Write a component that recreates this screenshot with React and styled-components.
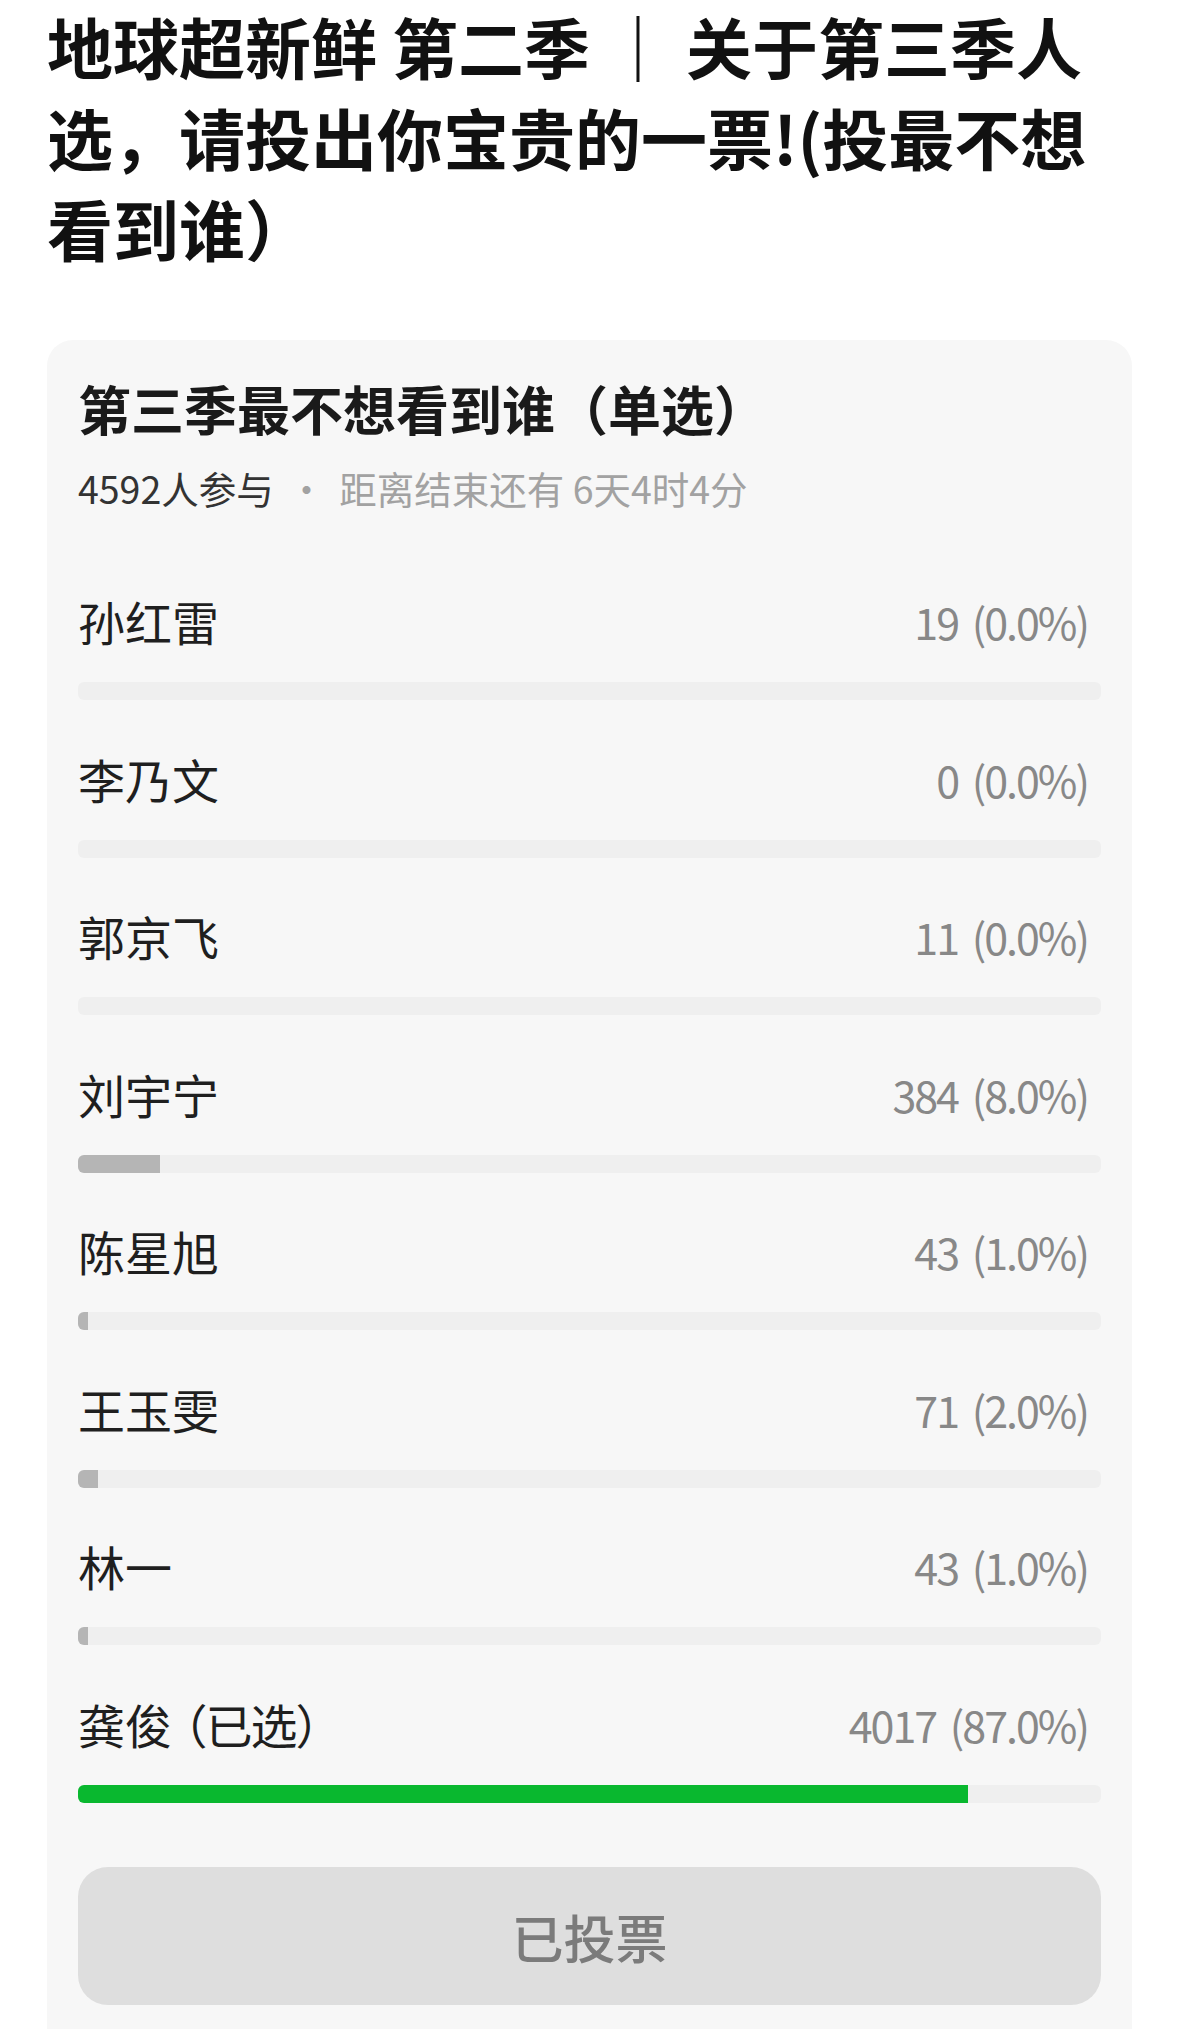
import React from "react";
import styled, { createGlobalStyle } from "styled-components";

const GlobalStyle = createGlobalStyle`
  html, body {
    margin: 0;
    padding: 0;
    background: #ffffff;
  }
  body {
    font-family: "Noto Sans CJK SC", "Noto Sans", sans-serif;
    -webkit-font-smoothing: antialiased;
  }
`;

const Page = styled.div`
  padding: 0 47px;
  overflow: hidden;
  height: 2029px;
  box-sizing: border-box;
`;

const Title = styled.h1`
  margin: 0;
  font-size: 66px;
  line-height: 91px;
  font-weight: 700;
  color: #111111;
`;

const Card = styled.section`
  margin-top: 67px;
  background: #f7f7f7;
  border-radius: 26px;
  padding: 36px 31px 60px;
`;

const CardTitle = styled.h2`
  margin: 0;
  font-size: 53px;
  line-height: 64px;
  font-weight: 700;
  color: #1a1a1a;
`;

const Meta = styled.div`
  margin-top: 24px;
  font-size: 37.5px;
  line-height: 48px;
  color: #a2a2a2;
  white-space: nowrap;
`;

const MetaStrong = styled.span`
  color: #333333;
`;

const MetaDot = styled.span`
  margin: 0 14px;
`;

const Options = styled.div`
  margin-top: 79px;
  display: flex;
  flex-direction: column;
`;

const Option = styled.div`
  margin-bottom: 48.5px;
  &:last-child {
    margin-bottom: 0;
  }
`;

const OptionHead = styled.div`
  display: flex;
  align-items: center;
  justify-content: space-between;
  height: 60px;
  padding-right: 13px;
`;

const Name = styled.span`
  font-size: 47px;
  line-height: 60px;
  color: #1f1f1f;
`;

const Chosen = styled.span`
  margin-left: 12px;
  letter-spacing: -2px;
  font-feature-settings: "halt";
`;

const Count = styled.span`
  font-size: 43px;
  line-height: 60px;
  letter-spacing: -2px;
  word-spacing: 6px;
  color: #888888;
`;

const Track = styled.div`
  margin-top: 31px;
  height: 18px;
  border-radius: 6px;
  background: #efefef;
  overflow: hidden;
`;

const Fill = styled.div`
  height: 100%;
  background: ${(p) => (p.$selected ? "#09b82f" : "#b5b5b5")};
`;

const VotedButton = styled.div`
  margin-top: 64.5px;
  height: 138px;
  border-radius: 30px;
  background: #dedede;
  display: flex;
  align-items: center;
  justify-content: center;
  font-size: 52px;
  font-weight: 500;
  color: #7b7b7b;
`;

const options = [
  { name: "孙红雷", votes: 19, pct: 0 },
  { name: "李乃文", votes: 0, pct: 0 },
  { name: "郭京飞", votes: 11, pct: 0 },
  { name: "刘宇宁", votes: 384, pct: 8 },
  { name: "陈星旭", votes: 43, pct: 1 },
  { name: "王玉雯", votes: 71, pct: 2 },
  { name: "林一", votes: 43, pct: 1 },
  { name: "龚俊", votes: 4017, pct: 87, selected: true },
];

export default function App() {
  return (
    <>
      <GlobalStyle />
      <Page>
        <Title>
          地球超新鲜 第二季 ｜ 关于第三季人选，请投出你宝贵的一票!(投最不想看到谁）
        </Title>
        <Card>
          <CardTitle>第三季最不想看到谁（单选）</CardTitle>
          <Meta>
            <MetaStrong>4592人参与</MetaStrong>
            <MetaDot>·</MetaDot>距离结束还有 6天4时4分
          </Meta>
          <Options>
            {options.map((o) => (
              <Option key={o.name}>
                <OptionHead>
                  <Name>
                    {o.name}
                    {o.selected && <Chosen>（已选）</Chosen>}
                  </Name>
                  <Count>
                    {o.votes} ({o.pct.toFixed(1)}%)
                  </Count>
                </OptionHead>
                <Track>
                  <Fill $selected={o.selected} style={{ width: `${o.pct}%` }} />
                </Track>
              </Option>
            ))}
          </Options>
          <VotedButton>已投票</VotedButton>
        </Card>
      </Page>
    </>
  );
}
